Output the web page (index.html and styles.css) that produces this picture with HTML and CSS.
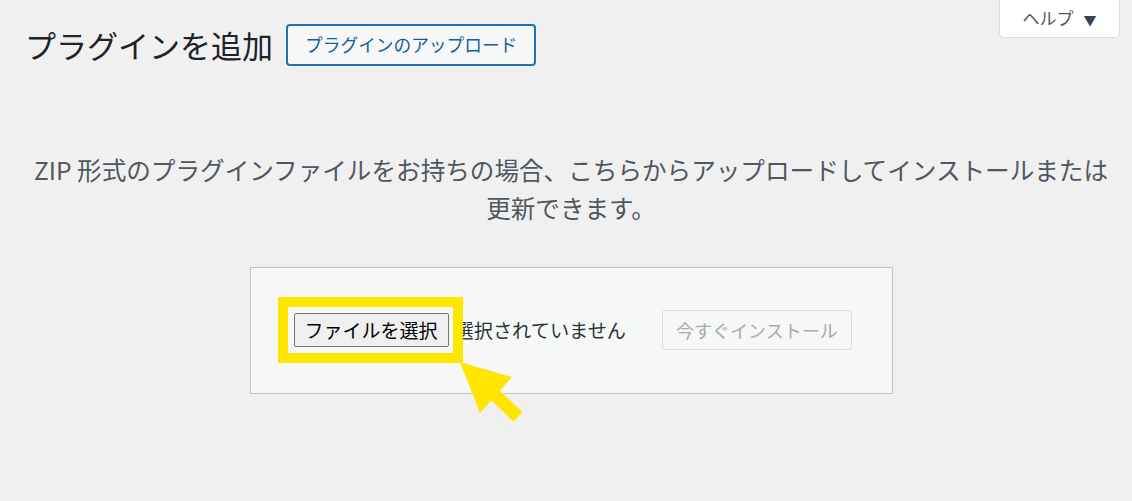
FILE: index.html
```html
<!DOCTYPE html>
<html lang="ja">
<head>
  <meta charset="UTF-8">
  <title>プラグインを追加</title>
  <link rel="stylesheet" href="styles.css">
</head>
<body>
  <div class="screen-meta">
    <button class="help-tab">ヘルプ <span class="caret">▼</span></button>
  </div>

  <div class="wrap">
    <div class="page-head">
      <h1>プラグインを追加</h1>
      <a class="upload-link" href="#">プラグインのアップロード</a>
    </div>

    <p class="install-help">ZIP 形式のプラグインファイルをお持ちの場合、こちらからアップロードしてインストールまたは<br>更新できます。</p>

    <form class="upload-form">
      <div class="file-field">
        <span class="file-button">ファイルを選択</span>
        <span class="file-name">選択されていません</span>
        <span class="highlight"></span>
        <svg class="pointer" viewBox="0 0 70 66">
          <polygon points="5,5 57,20 25,56" fill="#ffe600"/>
          <line x1="36" y1="34" x2="63" y2="60" stroke="#ffe600" stroke-width="13"/>
        </svg>
      </div>
      <button class="install-button" disabled>今すぐインストール</button>
    </form>
  </div>
</body>
</html>
```

FILE: styles.css
```css
html, body {
  min-height: 100%;
}

body {
  margin: 0;
  min-height: 501px;
  background: #f0f0f1;
  font-family: "Noto Sans CJK JP", "Noto Sans", sans-serif;
  color: #3c434a;
}

.screen-meta {
  float: right;
  margin-right: 12px;
}

.help-tab {
  width: 121px;
  height: 38px;
  background: #fff;
  border: 1px solid #dcdcde;
  border-top: none;
  border-radius: 0 0 5px 5px;
  font-family: inherit;
  font-size: 17px;
  color: #50575e;
  padding: 0 0 2px 0;
}

.caret {
  font-size: 13px;
  margin-left: 6px;
  color: #3c434a;
}

.wrap {
  padding: 24px 15px 100px 25px;
}

.page-head {
  display: flex;
  align-items: center;
  gap: 13px;
}

h1 {
  margin: 0;
  font-size: 31px;
  font-weight: 400;
  color: #1d2327;
  line-height: 42px;
}

.upload-link {
  display: inline-block;
  height: 38px;
  line-height: 36px;
  padding: 0 17px;
  border: 2px solid #2271b1;
  border-radius: 4px;
  background: #f6f7f7;
  font-size: 17.7px;
  text-decoration: none;
  color: #135e96;
}

.install-help {
  margin: 84px 0 0;
  text-align: center;
  font-size: 24.6px;
  line-height: 38px;
  color: #50575e;
}

.upload-form {
  width: 598px;
  margin: 41px auto 0;
  padding: 42px 0 43px 43px;
  border: 1px solid #c3c4c7;
  background: #f6f7f7;
  display: flex;
  align-items: center;
}

.file-field {
  position: relative;
  display: flex;
  align-items: center;
  gap: 6px;
  margin-right: 36px;
}

.file-button {
  display: inline-block;
  height: 32px;
  line-height: 31px;
  padding: 0 10px;
  border: 1px solid #767676;
  border-radius: 2px;
  background: #efefef;
  color: #000;
  font-size: 19px;
}

.file-name {
  font-size: 19.2px;
  color: #2c3338;
}

.highlight {
  position: absolute;
  left: -16px;
  top: -16px;
  width: 165px;
  height: 46px;
  border: 10px solid #ffe600;
}

.pointer {
  position: absolute;
  left: 161px;
  top: 44px;
  width: 70px;
  height: 66px;
  overflow: visible;
}

.install-button {
  height: 40px;
  padding: 0 13px;
  border: 1px solid #dcdcde;
  border-radius: 3px;
  background: #f6f7f7;
  color: #a7aaad;
  font-family: inherit;
  font-size: 18px;
}
```
